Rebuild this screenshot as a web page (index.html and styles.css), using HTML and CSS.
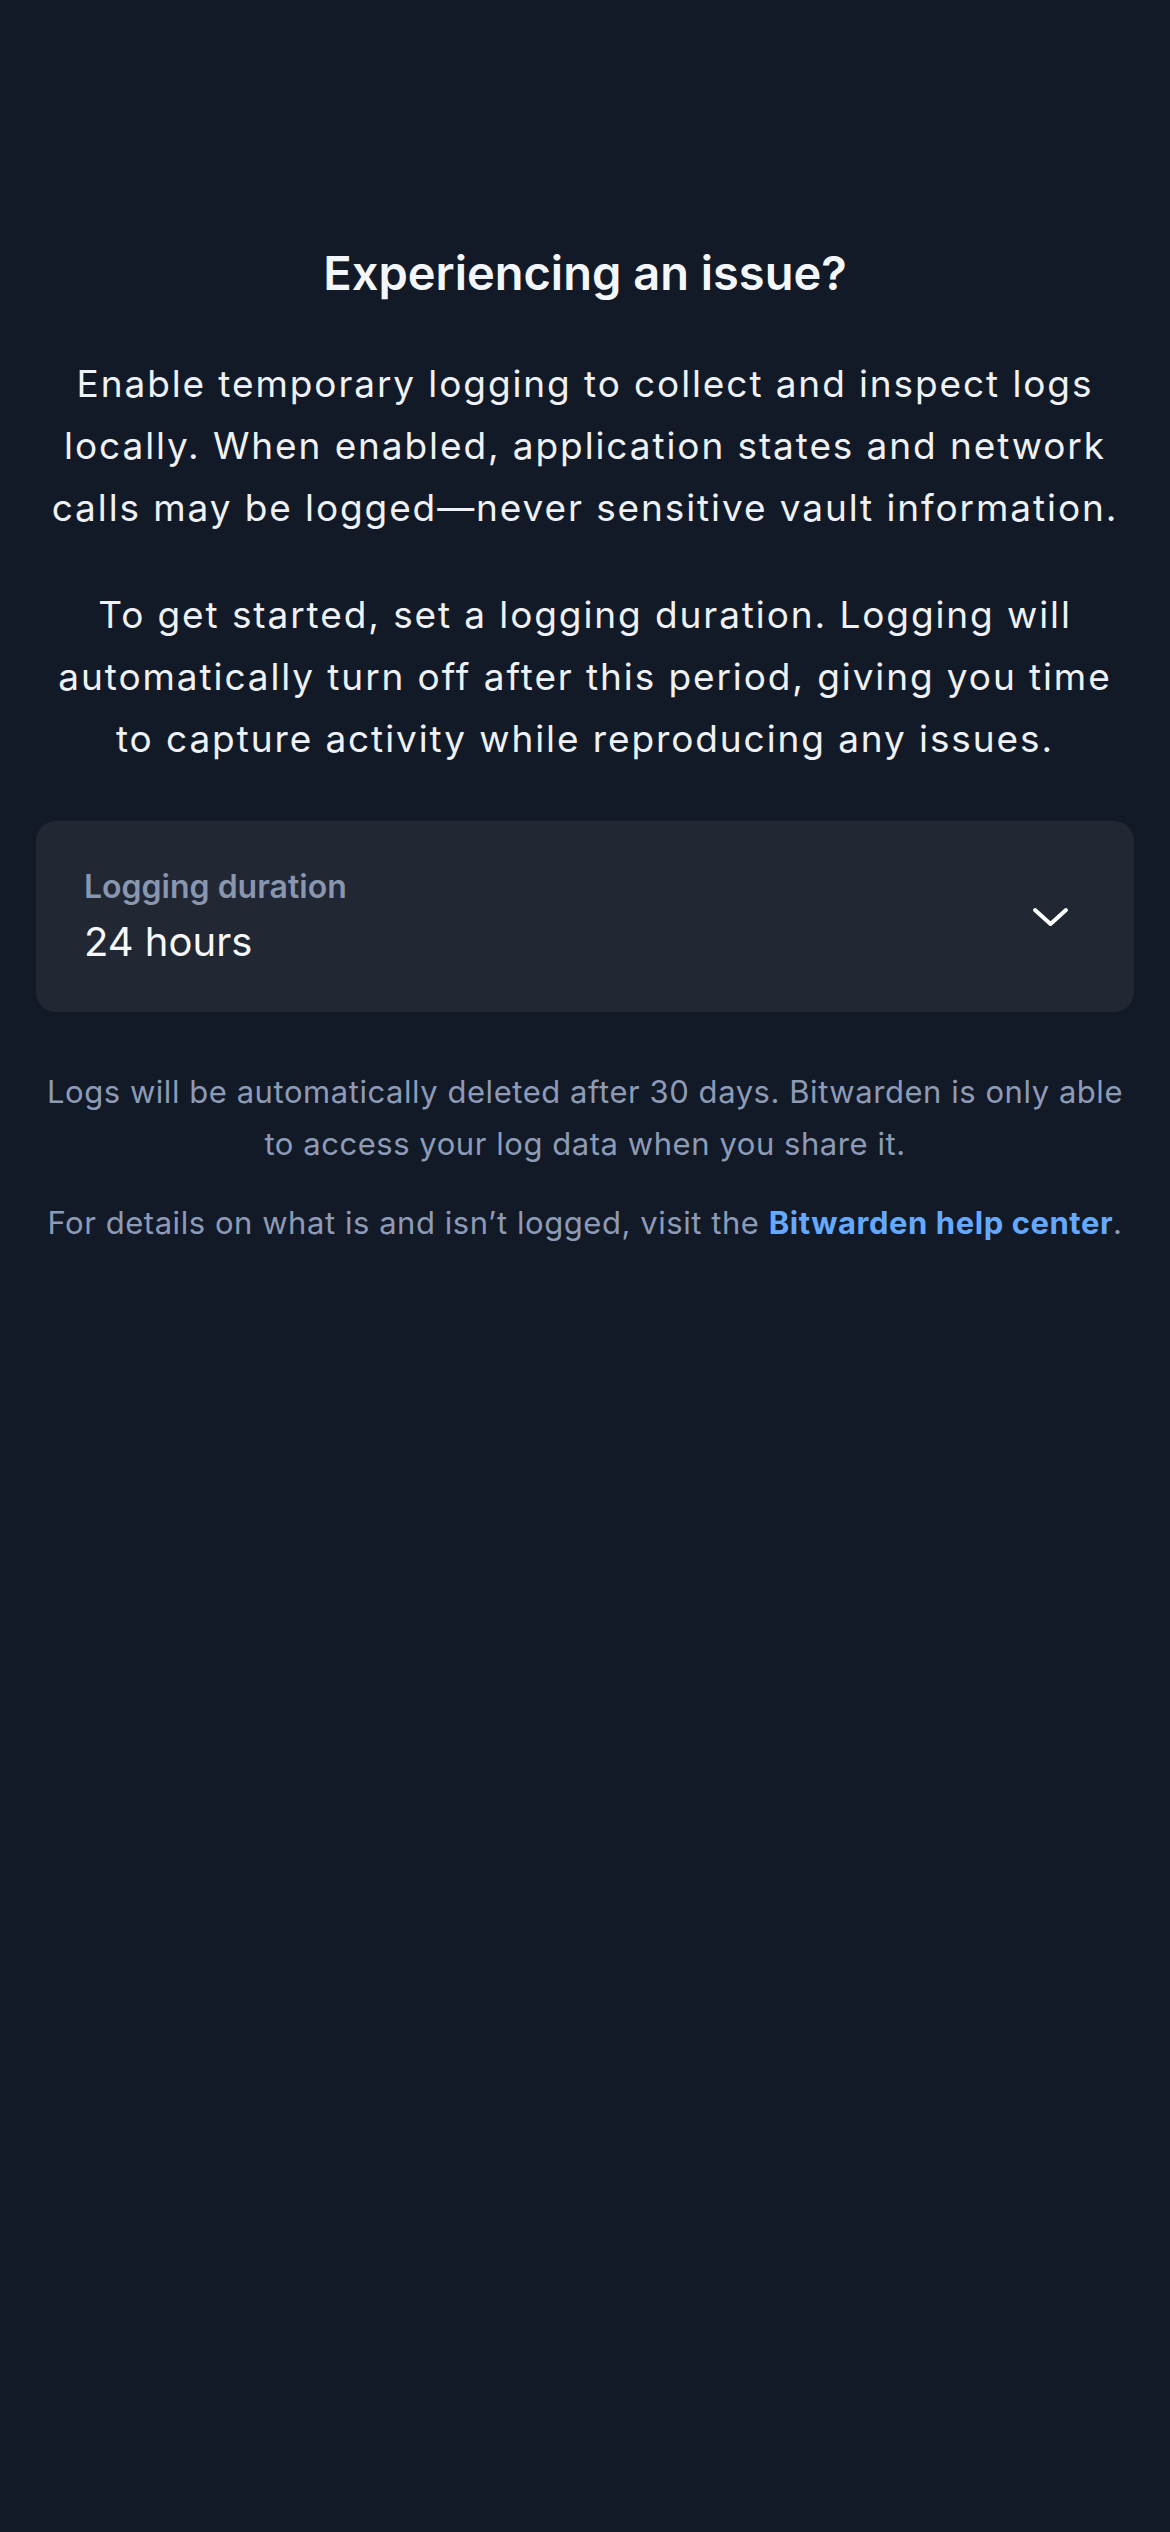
FILE: index.html
```html
<!DOCTYPE html>
<html lang="en">
<head>
<meta charset="utf-8">
<title>Experiencing an issue?</title>
<link rel="stylesheet" href="styles.css">
</head>
<body>
<main class="screen">
  <h1 class="title">Experiencing an issue?</h1>
  <p class="lead">Enable temporary logging to collect and inspect logs locally. When enabled, application states and network calls may be logged—never sensitive vault information.</p>
  <p class="lead second">To get started, set a logging duration. Logging will automatically turn off after this period, giving you time to capture activity while reproducing any issues.</p>
  <div class="select">
    <div class="select-text">
      <div class="select-label">Logging duration</div>
      <div class="select-value">24 hours</div>
    </div>
    <svg class="chevron" width="39" height="22" viewBox="0 0 39 22" aria-hidden="true">
      <polyline points="4,4 19.5,18 35,4" fill="none" stroke="#ffffff" stroke-width="4" stroke-linecap="round" stroke-linejoin="round"/>
    </svg>
  </div>
  <p class="note">Logs will be automatically deleted after 30 days. Bitwarden is only able to access your log data when you share it.</p>
  <p class="note second-note">For details on what is and isn’t logged, visit the <a class="link" href="#">Bitwarden help center</a>.</p>
</main>
</body>
</html>
```
FILE: styles.css
```css
html, body {
  margin: 0;
  padding: 0;
  background: #131a27;
}
body {
  font-family: Inter, "Noto Sans", sans-serif;
  color: #f2f4f8;
  width: 1170px;
  min-height: 2532px;
}
.screen {
  padding: 245px 36px 0;
  display: flex;
  flex-direction: column;
}
.title {
  margin: 0;
  font-size: 47px;
  line-height: 56px;
  font-weight: 600;
  text-align: center;
  color: #f3f6fa;
}
.lead {
  margin: 52px 0 0;
  font-size: 37px;
  line-height: 62px;
  letter-spacing: 1.9px;
  text-align: center;
  color: #eef1f6;
}
.lead.second {
  margin-top: 45px;
}
.select {
  margin-top: 51px;
  height: 191px;
  box-sizing: border-box;
  background: #212733;
  border-radius: 20px;
  display: flex;
  align-items: center;
  justify-content: space-between;
  padding: 0 64px 0 48px;
}
.select-text {
  display: flex;
  flex-direction: column;
  gap: 10px;
}
.select-label {
  font-size: 32px;
  line-height: 40px;
  font-weight: 600;
  color: #8896b0;
}
.select-value {
  font-size: 40px;
  line-height: 50px;
  color: #f5f7fa;
}
.chevron {
  display: block;
}
.note {
  margin: 54px 0 0;
  font-size: 31px;
  line-height: 52px;
  letter-spacing: 0.55px;
  text-align: center;
  color: #8d9bb6;
}
.note.second-note {
  margin-top: 27px;
}
.link {
  color: #65a9ff;
  font-weight: 700;
  text-decoration: none;
}
```
